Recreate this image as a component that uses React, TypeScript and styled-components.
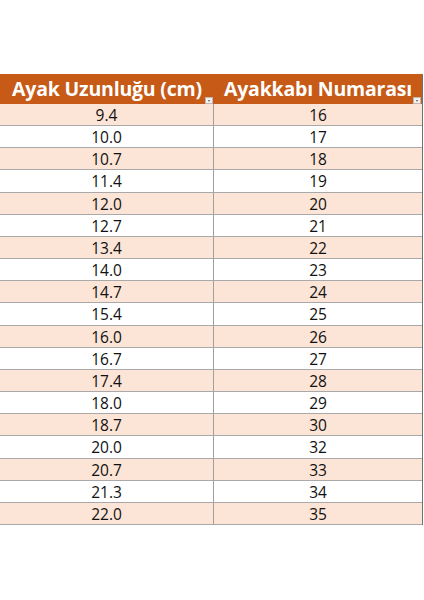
import React from "react";
import styled, { createGlobalStyle } from "styled-components";

const Global = createGlobalStyle`
  html, body { margin: 0; padding: 0; background: #ffffff; }
  body { width: 424px; height: 600px; overflow: hidden; }
`;

const Page = styled.div`
  padding-top: 74px;
  width: 424px;
`;

const Table = styled.div`
  width: 422px;
  display: grid;
  grid-template-columns: 214px 1fr;
  border-right: 1px solid #707070;
  font-family: "Open Sans", "Liberation Sans", sans-serif;
`;

const HeadCell = styled.div`
  position: relative;
  height: 30px;
  background: #c65a16;
  color: #ffffff;
  font-weight: 700;
  font-size: 19.5px;
  line-height: 30px;
  text-align: center;
  letter-spacing: -0.2px;
  white-space: nowrap;
`;

const FilterBtn = styled.span`
  position: absolute;
  right: 1px;
  bottom: 0px;
  width: 6px;
  height: 5px;
  background: #f2f2f2;
  border: 1px solid #b8b8b8;
  &::after {
    content: "";
    position: absolute;
    left: 1.5px;
    top: 1.5px;
    border-left: 1.5px solid transparent;
    border-right: 1.5px solid transparent;
    border-top: 2px solid #555;
  }
`;

const Cell = styled.div<{ $odd: boolean; $left: boolean }>`
  height: 22.16px;
  box-sizing: border-box;
  background: ${(p) => (p.$odd ? "#fce4d6" : "#ffffff")};
  border-bottom: 1px solid #a9a9a9;
  border-right: ${(p) => (p.$left ? "1px solid #a0a0a0" : "none")};
  color: #111111;
  font-size: 15.5px;
  line-height: 22px;
  text-align: center;
`;

const rows: [string, string][] = [
  ["9.4", "16"],
  ["10.0", "17"],
  ["10.7", "18"],
  ["11.4", "19"],
  ["12.0", "20"],
  ["12.7", "21"],
  ["13.4", "22"],
  ["14.0", "23"],
  ["14.7", "24"],
  ["15.4", "25"],
  ["16.0", "26"],
  ["16.7", "27"],
  ["17.4", "28"],
  ["18.0", "29"],
  ["18.7", "30"],
  ["20.0", "32"],
  ["20.7", "33"],
  ["21.3", "34"],
  ["22.0", "35"],
];

export default function App() {
  return (
    <>
      <Global />
      <Page>
        <Table>
          <HeadCell>
            Ayak Uzunluğu (cm)
            <FilterBtn />
          </HeadCell>
          <HeadCell>
            Ayakkabı Numarası
            <FilterBtn />
          </HeadCell>
          {rows.map(([a, b], i) => (
            <React.Fragment key={a}>
              <Cell $odd={i % 2 === 0} $left>
                {a}
              </Cell>
              <Cell $odd={i % 2 === 0} $left={false}>
                {b}
              </Cell>
            </React.Fragment>
          ))}
        </Table>
      </Page>
    </>
  );
}
